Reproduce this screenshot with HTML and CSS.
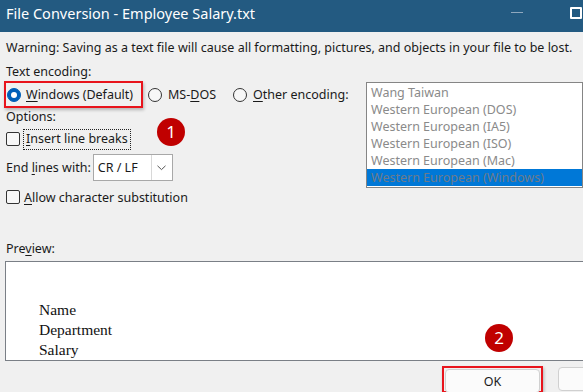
FILE: index.html
```html
<!DOCTYPE html>
<html>
<head>
<meta charset="utf-8">
<link rel="stylesheet" href="styles.css">
</head>
<body>
<div class="window">
  <header class="titlebar">
    <span class="title">File Conversion - Employee Salary.txt</span>
    <div class="controls"><span class="min"></span><span class="max"></span></div>
  </header>
  <main class="content">
    <p class="warning">Warning: Saving as a text file will cause all formatting, pictures, and objects in your file to be lost.</p>
    <p class="label enc-label">Text encoding:</p>
    <div class="encoding">
      <div class="left">
        <div class="radios">
          <label class="radio highlight"><span class="dot on"></span><span><u>W</u>indows (Default)</span></label>
          <label class="radio"><span class="dot"></span><span>MS-<u>D</u>OS</span></label>
          <label class="radio other"><span class="dot"></span><span><u>O</u>ther encoding:</span></label>
        </div>
        <p class="label options">Options:</p>
        <div class="check-row first"><span class="box"></span><span class="focus"><u>I</u>nsert line breaks</span></div>
        <div class="endlines">
          <span>End <u>l</u>ines with:</span>
          <div class="select"><span class="value">CR / LF</span><span class="arrow"><svg width="9" height="6" viewBox="0 0 9 6"><path d="M0.5 0.8 L4.5 4.6 L8.5 0.8" fill="none" stroke="#555" stroke-width="1"/></svg></span></div>
        </div>
        <div class="check-row last"><span class="box"></span><span><u>A</u>llow character substitution</span></div>
      </div>
      <ul class="listbox">
        <li>Wang Taiwan</li>
        <li>Western European (DOS)</li>
        <li>Western European (IA5)</li>
        <li>Western European (ISO)</li>
        <li>Western European (Mac)</li>
        <li class="sel">Western European (Windows)</li>
      </ul>
    </div>
    <p class="label preview-label">Pre<u>v</u>iew:</p>
    <div class="preview">
      <p>Name</p>
      <p>Department</p>
      <p>Salary</p>
    </div>
    <div class="buttons">
      <div class="ok-wrap"><button class="btn">OK</button></div>
      <button class="btn cancel" aria-label="Cancel"></button>
    </div>
    <span class="badge b1">1</span>
    <span class="badge b2">2</span>
  </main>
</div>
</body>
</html>
```
FILE: styles.css
```css
* { box-sizing: border-box; }
html, body { margin: 0; padding: 0; }
body {
  width: 583px; height: 392px; overflow: hidden;
  background: #f0f0f0;
  font-family: "Noto Sans", "Open Sans", sans-serif;
  font-size: 12.5px; color: #1a1a1a;
}
p { margin: 0; }
u { text-decoration: underline; text-underline-offset: 2px; }
.window { width: 583px; height: 392px; position: relative; overflow: hidden; }

.titlebar {
  height: 32px; background: #235a81; color: #fff;
  display: flex; align-items: flex-start; justify-content: space-between;
}
.title { font-size: 14.5px; line-height: 27px; padding-left: 6px; }
.controls { display: flex; align-items: flex-start; }
.min { width: 12px; height: 1px; background: #8fa8be; margin-top: 12px; margin-right: 47px; }
.max { width: 12px; height: 12px; border: 2px solid #fff; border-radius: 1px; margin-top: 7px; margin-right: 1px; }

.content { position: relative; padding-left: 5px; height: 360px; }
.warning { line-height: 16px; padding-top: 8px; padding-left: 1px; white-space: nowrap; }
.label { line-height: 16px; padding-left: 1px; }
.enc-label { margin-top: 8px; }

.encoding { display: grid; grid-template-columns: 361px 1fr; }
.radios { display: flex; align-items: center; margin-top: 1px; }
.radio { display: flex; align-items: center; gap: 6px; height: 27px; white-space: nowrap; }
.radio.highlight {
  border: 2px solid #e8141c; width: 139px; margin-left: -1px; padding-left: 1px;
  box-shadow: 1px 2px 3px rgba(0,0,0,0.25);
  gap: 5px;
}
.radio:nth-child(2) { margin-left: 5px; }
.radio.other { margin-left: 17px; }
.dot { width: 14px; height: 14px; border-radius: 50%; border: 1px solid #333; background: #f7f7f7; flex: none; }
.dot.on { background: #005fb8; border-color: #005fb8; position: relative; }
.dot.on::after { content: ""; position: absolute; left: 3px; top: 3px; width: 6px; height: 6px; border-radius: 50%; background: #fff; }

.options { margin-top: 1px; }
.check-row { display: flex; align-items: center; gap: 4px; height: 20px; white-space: nowrap; }
.check-row.first { margin-top: 4px; }
.check-row.last { margin-top: 6px; }
.box { width: 14px; height: 14px; border: 1px solid #333; border-radius: 2px; background: #f7f7f7; flex: none; margin-left: 1px; }
.focus { outline: 1px dotted #222; padding: 1px 2px 2px 2px; line-height: 16px; }

.endlines { display: flex; align-items: center; gap: 2px; margin-top: 5px; padding-left: 1px; white-space: nowrap; }
.select { width: 80px; height: 27px; border: 1px solid #a8a8a8; background: #fff; display: flex; }
.select .value { flex: 1; line-height: 25px; padding-left: 4px; }
.select .arrow { width: 21px; border-left: 1px solid #d8d8d8; display: flex; align-items: center; justify-content: center; }

.listbox {
  list-style: none; margin: 2px 0 0 0; padding: 1px 0 0 0;
  height: 106px; border: 1px solid #858585;
  background: #fff; color: #8a8a8a; width: 217px;
}
.listbox li { height: 17px; line-height: 17px; padding-left: 4px; white-space: nowrap; }
.listbox li.sel { background: #0078d7; color: #6e7b8a; }

.preview-label { margin-top: 34px; }
.preview {
  margin-top: 4px; height: 100px; width: 590px;
  border: 1px solid #7a7f86; background: #fff;
  padding: 38px 0 0 33px;
  font-family: "Liberation Serif", serif; font-size: 15.5px; color: #111;
  overflow: hidden;
}
.preview p { line-height: 20px; }

.buttons { display: flex; align-items: flex-start; margin-top: 5px; padding-left: 437px; gap: 15px; }
.ok-wrap { border: 2px solid #e8141c; padding: 1px 1px 0 1px; width: 101px; height: 27px; flex: none; box-shadow: 1px 2px 3px rgba(0,0,0,0.25); }
.btn {
  width: 95px; height: 24px; font: inherit; font-size: 12.5px; color: #1a1a1a;
  background: #fbfbfb; border: 1px solid #d0d0d0; border-radius: 4px;
}
.cancel { flex: none; margin-top: 1px; }

.badge {
  position: absolute; width: 28px; height: 28px; border-radius: 50%;
  background: #c00000; color: #fff; font-size: 17px; line-height: 28px; text-align: center;
}
.b1 { left: 157px; top: 86px; }
.b2 { left: 485px; top: 292px; }
```
